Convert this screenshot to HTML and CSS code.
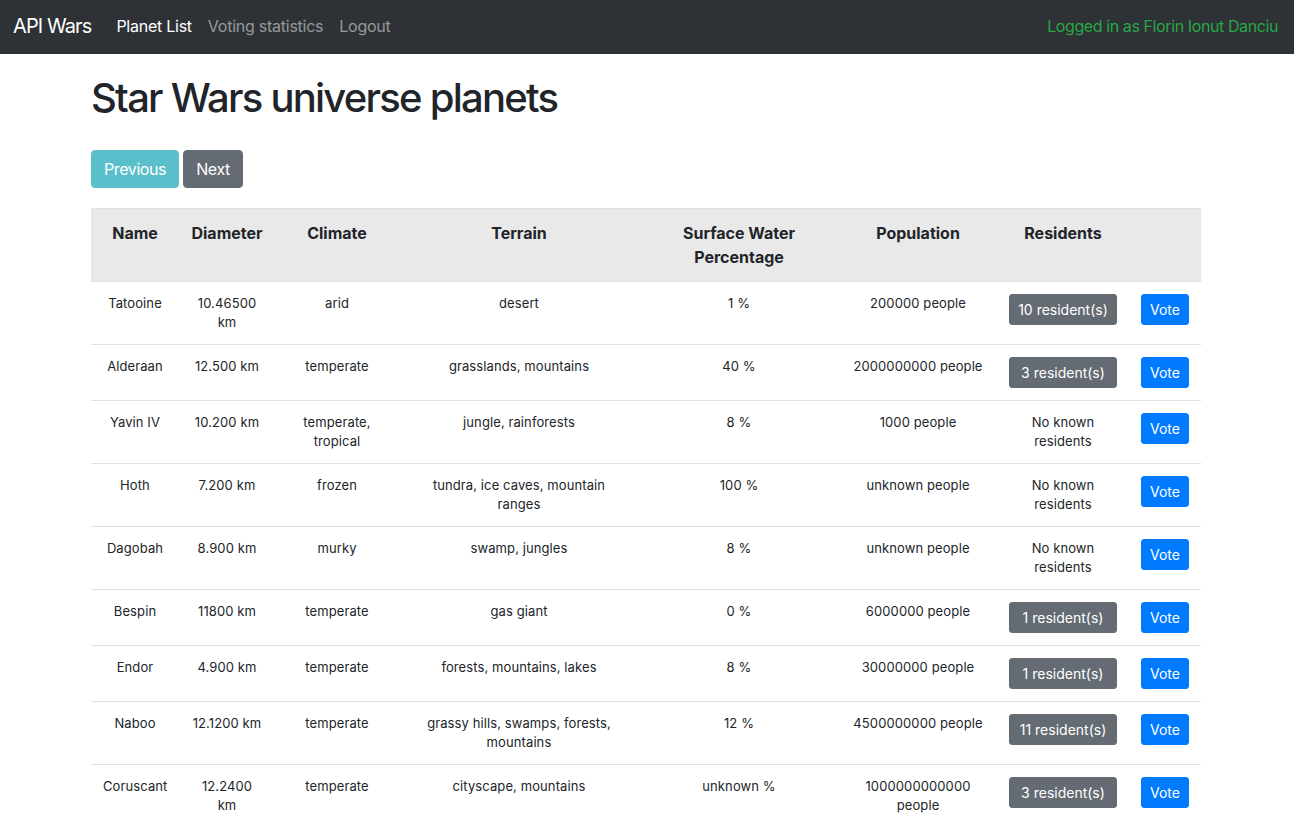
FILE: index.html
```html
<!DOCTYPE html>
<html lang="en">
<head>
<meta charset="utf-8">
<title>API Wars</title>
<link rel="stylesheet" href="styles.css">
</head>
<body>
<nav class="navbar">
  <a class="brand" href="#">API Wars</a>
  <ul class="nav-links">
    <li><a class="nav-link active" href="#">Planet List</a></li>
    <li><a class="nav-link" href="#">Voting statistics</a></li>
    <li><a class="nav-link" href="#">Logout</a></li>
  </ul>
  <span class="user">Logged in as Florin Ionut Danciu</span>
</nav>
<main class="container">
  <h1 class="title">Star Wars universe planets</h1>
  <div class="pager">
    <button class="btn btn-info" disabled>Previous</button>
    <button class="btn btn-secondary">Next</button>
  </div>
  <table class="planets">
    <colgroup>
      <col class="c-name"><col class="c-diam"><col class="c-clim"><col class="c-terr"><col class="c-water"><col class="c-pop"><col class="c-res"><col class="c-vote">
    </colgroup>
    <thead>
      <tr><th>Name</th><th>Diameter</th><th>Climate</th><th>Terrain</th><th>Surface Water Percentage</th><th>Population</th><th>Residents</th><th></th></tr>
    </thead>
    <tbody>
      <tr><td>Tatooine</td><td>10.46500 km</td><td>arid</td><td>desert</td><td>1 %</td><td>200000 people</td><td><button class="btn-sm btn-block btn-secondary">10 resident(s)</button></td><td><button class="btn-sm btn-primary">Vote</button></td></tr>
      <tr><td>Alderaan</td><td>12.500 km</td><td>temperate</td><td>grasslands, mountains</td><td>40 %</td><td>2000000000 people</td><td><button class="btn-sm btn-block btn-secondary">3 resident(s)</button></td><td><button class="btn-sm btn-primary">Vote</button></td></tr>
      <tr><td>Yavin IV</td><td>10.200 km</td><td>temperate, tropical</td><td>jungle, rainforests</td><td>8 %</td><td>1000 people</td><td>No known residents</td><td><button class="btn-sm btn-primary">Vote</button></td></tr>
      <tr><td>Hoth</td><td>7.200 km</td><td>frozen</td><td>tundra, ice caves, mountain ranges</td><td>100 %</td><td>unknown people</td><td>No known residents</td><td><button class="btn-sm btn-primary">Vote</button></td></tr>
      <tr><td>Dagobah</td><td>8.900 km</td><td>murky</td><td>swamp, jungles</td><td>8 %</td><td>unknown people</td><td>No known residents</td><td><button class="btn-sm btn-primary">Vote</button></td></tr>
      <tr><td>Bespin</td><td>11800 km</td><td>temperate</td><td>gas giant</td><td>0 %</td><td>6000000 people</td><td><button class="btn-sm btn-block btn-secondary">1 resident(s)</button></td><td><button class="btn-sm btn-primary">Vote</button></td></tr>
      <tr><td>Endor</td><td>4.900 km</td><td>temperate</td><td>forests, mountains, lakes</td><td>8 %</td><td>30000000 people</td><td><button class="btn-sm btn-block btn-secondary">1 resident(s)</button></td><td><button class="btn-sm btn-primary">Vote</button></td></tr>
      <tr><td>Naboo</td><td>12.1200 km</td><td>temperate</td><td>grassy hills, swamps, forests, mountains</td><td>12 %</td><td>4500000000 people</td><td><button class="btn-sm btn-block btn-secondary">11 resident(s)</button></td><td><button class="btn-sm btn-primary">Vote</button></td></tr>
      <tr><td>Coruscant</td><td>12.2400 km</td><td>temperate</td><td>cityscape, mountains</td><td>unknown %</td><td>1000000000000 people</td><td><button class="btn-sm btn-block btn-secondary">3 resident(s)</button></td><td><button class="btn-sm btn-primary">Vote</button></td></tr>
    </tbody>
  </table>
</main>
</body>
</html>
```

FILE: styles.css
```css
* { box-sizing: border-box; }
html, body { margin: 0; }
body {
  font-family: Inter, "Helvetica Neue", Arial, sans-serif;
  font-size: 16px;
  line-height: 1.5;
  color: #212529;
  background: #fff;
}
a { text-decoration: none; }

.navbar {
  display: flex;
  align-items: center;
  height: 54px;
  padding: 0 16px 2px 13px;
  background: #2e3236;
  letter-spacing: -0.25px;
}
.brand {
  font-size: 20px;
  color: #fff;
  margin-right: 17px;
  line-height: 30px;
  letter-spacing: -0.9px;
}
.nav-links {
  display: flex;
  list-style: none;
  margin: 0;
  padding: 0;
}
.nav-link {
  display: block;
  padding: 8px;
  color: rgba(255,255,255,.5);
}
.nav-link.active { color: #fff; }
.user {
  margin-left: auto;
  color: #28a745;
  letter-spacing: -0.4px;
}

.container {
  width: 1110px;
  margin-left: calc(50% - 556px);
  padding-top: 20px;
}
.title {
  font-size: 40px;
  font-weight: 500;
  line-height: 48px;
  margin: 0 0 28px;
  letter-spacing: -1.75px;
}
.pager {
  display: flex;
  gap: 4px;
  margin-bottom: 20px;
}
.btn, .btn-sm {
  font-family: inherit;
  border: 1px solid transparent;
  color: #fff;
  cursor: pointer;
}
.btn {
  font-size: 16px;
  line-height: 24px;
  padding: 6px 12px;
  border-radius: 4px;
  letter-spacing: -0.4px;
}
.btn-sm {
  font-size: 14px;
  line-height: 21px;
  padding: 4px 8px;
  border-radius: 3px;
}
.btn-block { display: block; width: 100%; }
.btn-info { background: #5bbfcb; border-color: #5bbfcb; cursor: default; }
.btn-secondary { background: #646b72; border-color: #646b72; }
.btn-primary { background: #007bff; border-color: #007bff; }

.planets {
  width: 1110px;
  table-layout: fixed;
  border-collapse: collapse;
  text-align: center;
}
.c-name { width: 88px; }
.c-diam { width: 96px; }
.c-clim { width: 124px; }
.c-terr { width: 240px; }
.c-water { width: 200px; }
.c-pop { width: 158px; }
.c-res { width: 132px; }
.c-vote { width: 72px; }

.planets th {
  background: #e9e9e9;
  color: #212529;
  font-weight: 700;
  vertical-align: top;
  padding: 12px;
  border-top: 1px solid #dee2e6;
  border-bottom: 1px solid #dee2e6;
}
.planets td {
  font-size: 13px;
  line-height: 19px;
  letter-spacing: 0.1px;
  vertical-align: top;
  padding: 12px;
  border-top: 1px solid #dee2e6;
}
.planets tbody tr:first-child td { border-top: 0; }
```
